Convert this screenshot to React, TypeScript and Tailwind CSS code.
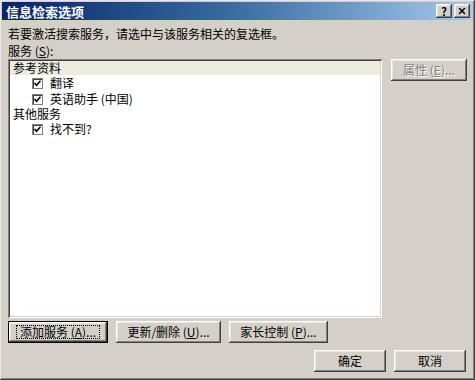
import { X } from 'lucide-react'

const font = { fontFamily: '"Noto Sans CJK SC", "Noto Sans", sans-serif' }

const raised =
  'bg-[#d4d0c8] shadow-[inset_-1px_-1px_0_#404040,inset_1px_1px_0_#ffffff,inset_-2px_-2px_0_#808080,inset_2px_2px_0_#e8e6e0]'

function Btn({ children, className = '', def = false }: { children: React.ReactNode; className?: string; def?: boolean }) {
  if (def) {
    return (
      <div className={`h-[22px] border border-black flex items-center justify-center ${className}`}>
        <div className={`w-full h-full flex items-center justify-center ${raised}`}>
          <span className="px-[4px] outline outline-1 outline-dotted outline-black -outline-offset-1 leading-[14px]">{children}</span>
        </div>
      </div>
    )
  }
  return <div className={`h-[22px] flex items-center justify-center ${raised} ${className}`}>{children}</div>
}

function Check({ label }: { label: string }) {
  return (
    <div className="h-[16px] flex items-center pl-[22px] gap-[7px]">
      <div className="w-[11px] h-[11px] bg-white border border-[#808080] shadow-[inset_1px_1px_0_#404040] flex items-center justify-center">
        <svg width="9" height="9" viewBox="0 0 9 9">
          <path d="M1.5 4 L3.5 6.2 L7.5 1.8" fill="none" stroke="#000" strokeWidth="1.6" />
        </svg>
      </div>
      <span>{label}</span>
    </div>
  )
}

export default function App() {
  return (
    <div
      className="w-[475px] h-[380px] bg-[#d4d0c8] text-[12px] text-black flex flex-col p-[2px] shadow-[inset_-1px_-1px_0_#404040,inset_1px_1px_0_#e8e6e0,inset_-2px_-2px_0_#808080]"
      style={font}
    >
      {/* Title bar */}
      <div className="h-[18px] flex items-center justify-between pl-[4px] pr-[3px] bg-gradient-to-r from-[#0a246a] via-[#3a6ea5] to-[#a6caf0]">
        <span className="text-white font-bold text-[13px] leading-none">信息检索选项</span>
        <div className="flex gap-[2px]">
          <div className={`w-[16px] h-[14px] flex items-center justify-center font-bold text-[11px] leading-none ${raised}`}>?</div>
          <div className={`w-[16px] h-[14px] flex items-center justify-center ${raised}`}>
            <X className="w-[10px] h-[10px]" strokeWidth={3.5} />
          </div>
        </div>
      </div>

      <div className="flex flex-col px-[6px]">
        <div className="mt-[5px] h-[18px] leading-[18px]">若要激活搜索服务，请选中与该服务相关的复选框。</div>
        <div className="h-[16px] leading-[16px]">
          服务 (<span className="underline">S</span>):
        </div>

        <div className="flex">
          {/* List */}
          <div className="w-[374px] h-[259px] bg-white p-[2px] shadow-[inset_1px_1px_0_#808080,inset_-1px_-1px_0_#ffffff,inset_2px_2px_0_#404040,inset_-2px_-2px_0_#d4d0c8]">
            <div className="h-[14px] leading-[14px] pl-[3px] bg-[#ececdf]">参考资料</div>
            <Check label="翻译" />
            <Check label="英语助手 (中国)" />
            <div className="h-[14px] leading-[14px] pl-[3px]">其他服务</div>
            <Check label="找不到?" />
          </div>

          <div className="ml-[9px]">
            <Btn className="w-[76px] text-[#808080] [text-shadow:1px_1px_0_#ffffff]">
              属性 (<span className="underline">E</span>)...
            </Btn>
          </div>
        </div>

        <div className="flex gap-[8px] mt-[3px]">
          <Btn def className="w-[100px]">
            添加服务 (<span className="underline">A</span>)...
          </Btn>
          <Btn className="w-[105px]">
            更新/删除 (<span className="underline">U</span>)...
          </Btn>
          <Btn className="w-[99px]">
            家长控制 (<span className="underline">P</span>)...
          </Btn>
        </div>

        <div className="flex justify-end gap-[8px] mt-[7px] pr-[1px]">
          <Btn className="w-[72px]">确定</Btn>
          <Btn className="w-[72px]">取消</Btn>
        </div>
      </div>
    </div>
  )
}
